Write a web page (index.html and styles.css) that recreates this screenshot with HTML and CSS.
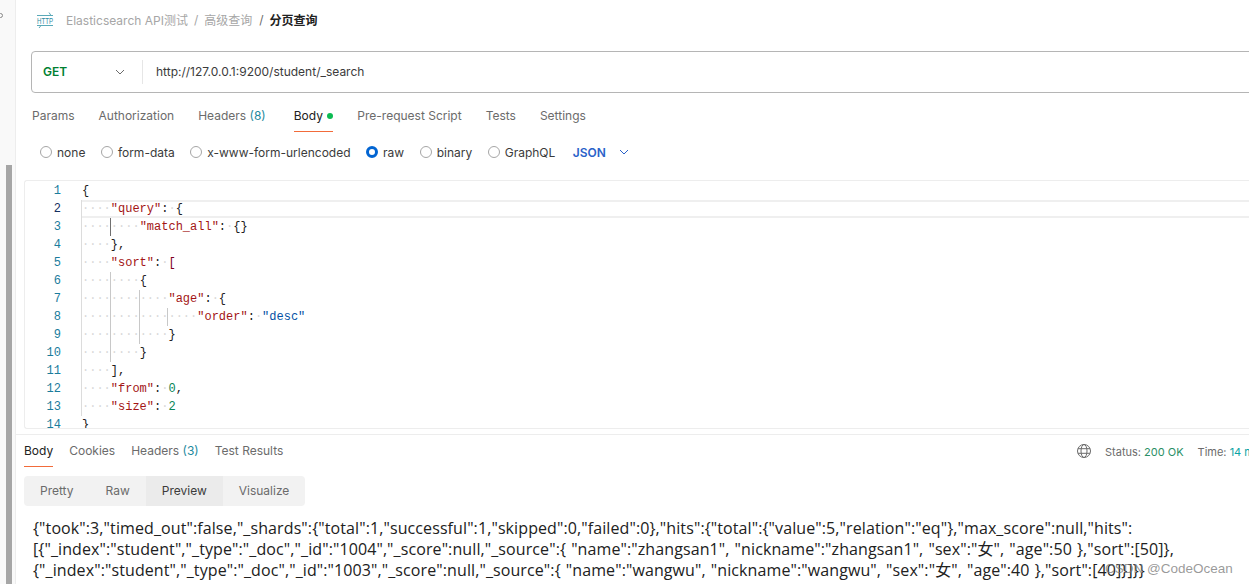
FILE: index.html
```html
<!DOCTYPE html>
<html lang="en">
<head>
<meta charset="utf-8">
<title>Postman</title>
<link rel="stylesheet" href="styles.css">
</head>
<body>
<div class="app">
  <aside class="rail"><div class="rail-dot"></div><div class="rail-thumb"></div></aside>
  <main class="main">
    <header class="crumbs">
      <svg class="http-icon" width="18" height="16" viewBox="0 0 18 16"><path d="M1 3.5H17M13 0.5L15 3.5M1 13.5H17M3 16L5 13.5" fill="none" stroke="#5aa9b8" stroke-width="1"/><text x="1" y="12" textLength="16" lengthAdjust="spacingAndGlyphs" class="http-text">HTTP</text></svg>
      <span class="crumb">Elasticsearch API测试</span><span class="sep">/</span>
      <span class="crumb">高级查询</span><span class="sep dark">/</span>
      <span class="crumb current">分页查询</span>
    </header>
    <div class="urlbar">
      <div class="method"><span>GET</span><svg width="10" height="6" viewBox="0 0 10 6"><path d="M1 1L5 5L9 1" fill="none" stroke="#6b6b6b" stroke-width="1"/></svg></div>
      <div class="url">http://127.0.0.1:9200/student/_search</div>
    </div>
    <nav class="tabs req-tabs">
      <span class="tab">Params</span>
      <span class="tab">Authorization</span>
      <span class="tab wide">Headers <em>(8)</em></span>
      <span class="tab active">Body <i class="dot"></i></span>
      <span class="tab">Pre-request Script</span>
      <span class="tab">Tests</span>
      <span class="tab">Settings</span>
    </nav>
    <div class="radios">
      <label class="radio"><i></i>none</label>
      <label class="radio"><i></i>form-data</label>
      <label class="radio"><i></i>x-www-form-urlencoded</label>
      <label class="radio on"><i></i>raw</label>
      <label class="radio"><i></i>binary</label>
      <label class="radio"><i></i>GraphQL</label>
      <span class="lang">JSON<svg width="10" height="6" viewBox="0 0 10 6"><path d="M1 1L5 5L9 1" fill="none" stroke="#2a62c9" stroke-width="1"/></svg></span>
    </div>
    <section class="editor">
      <div class="line"><b>1</b><code><u>{</u></code></div>
      <div class="line cur"><b>2</b><code><s>····</s><q>"query"</q><u>:</u><s>·</s><u>{</u></code></div>
      <div class="line"><b>3</b><code><s>····</s><s class="g1">····</s><q>"match_all"</q><u>:</u><s>·</s><u>{}</u></code></div>
      <div class="line"><b>4</b><code><s>····</s><u>},</u></code></div>
      <div class="line"><b>5</b><code><s>····</s><q>"sort"</q><u>:</u><s>·</s><u class="red">[</u></code></div>
      <div class="line"><b>6</b><code><s>····</s><s class="g2">····</s><u>{</u></code></div>
      <div class="line"><b>7</b><code><s>····</s><s class="g2">····</s><s class="g2">····</s><q>"age"</q><u>:</u><s>·</s><u>{</u></code></div>
      <div class="line"><b>8</b><code><s>····</s><s class="g2">····</s><s class="g2">····</s><s class="g2">····</s><q>"order"</q><u>:</u><s>·</s><span class="str">"desc"</span></code></div>
      <div class="line"><b>9</b><code><s>····</s><s class="g2">····</s><s class="g2">····</s><u>}</u></code></div>
      <div class="line"><b>10</b><code><s>····</s><s class="g2">····</s><u>}</u></code></div>
      <div class="line"><b>11</b><code><s>····</s><u>],</u></code></div>
      <div class="line"><b>12</b><code><s>····</s><q>"from"</q><u>:</u><s>·</s><span class="num">0</span><u>,</u></code></div>
      <div class="line"><b>13</b><code><s>····</s><q>"size"</q><u>:</u><s>·</s><span class="num">2</span></code></div>
      <div class="line"><b>14</b><code><u>}</u></code></div>
    </section>
    <section class="response">
      <div class="res-head">
        <nav class="tabs res-tabs">
          <span class="tab active">Body</span>
          <span class="tab">Cookies</span>
          <span class="tab">Headers <em>(3)</em></span>
          <span class="tab">Test Results</span>
        </nav>
        <div class="status">
          <svg width="14" height="14" viewBox="0 0 14 14" fill="none" stroke="#6b6b6b" stroke-width="1"><circle cx="7" cy="7" r="6.5"/><ellipse cx="7" cy="7" rx="3" ry="6.5"/><path d="M1 4.7H13M1 9.3H13"/></svg>
          <span class="st">Status: <em>200 OK</em></span>
          <span class="st">Time: <em class="teal">14 ms</em></span>
        </div>
      </div>
      <div class="segments">
        <span>Pretty</span><span>Raw</span><span class="sel">Preview</span><span>Visualize</span>
      </div>
      <div class="preview">{"took":3,"timed_out":false,"_shards":{"total":1,"successful":1,"skipped":0,"failed":0},"hits":{"total":{"value":5,"relation":"eq"},"max_score":null,"hits":<br>[{"_index":"student","_type":"_doc","_id":"1004","_score":null,"_source":{ "name":"zhangsan1", "nickname":"zhangsan1", "sex":"女", "age":50 },"sort":[50]},<br>{"_index":"student","_type":"_doc","_id":"1003","_score":null,"_source":{ "name":"wangwu", "nickname":"wangwu", "sex":"女", "age":40 },"sort":[40]}]}}</div>
    </section>
  </main>
</div>
<div class="watermark">CSDN @CodeOcean</div>
</body>
</html>
```
FILE: styles.css
```css
* { box-sizing: border-box; }
html, body { margin: 0; height: 584px; overflow: hidden; background: #fff; }
body { font-family: Inter, "Noto Sans CJK SC", sans-serif; font-size: 12px; color: #6b6b6b; position: relative; }
em { font-style: normal; color: #1f8a9e; }
.app { display: flex; width: 1249px; height: 584px; }
.rail { width: 16px; flex: none; background: #f9f9f9; border-right: 1px solid #ededed; position: relative; padding-top: 165px; }
.rail-dot { position: absolute; left: -2px; top: 13px; width: 5px; height: 5px; border: 1px solid #888; border-radius: 50%; }
.rail-thumb { width: 6px; height: 419px; margin-left: 6px; background: #a6a6a6; }
.main { flex: 1; min-width: 0; display: flex; flex-direction: column; }
.crumbs { height: 38px; padding: 0 0 0 20px; display: flex; align-items: center; gap: 6px; color: #a6a6a6; white-space: nowrap; }
.http-icon { margin: 2px 6px 0 0; overflow: visible; }
.http-text { font: 400 9px "Liberation Sans", sans-serif; fill: #2f8ca3; }
.sep.dark { color: #6b6b6b; margin-left: 1px; }
.current { color: #212121; font-weight: 600; }
.urlbar { margin: 13px 0 0 15px; height: 42px; width: 1240px; border: 1px solid #b5b5b5; border-radius: 4px; display: flex; align-items: center; }
.method { width: 111px; height: 24px; padding: 0 17px 1px 11px; border-right: 1px solid #e6e6e6; display: flex; align-items: center; justify-content: space-between; font-weight: 600; color: #007f31; }
.url { padding: 0 0 2px 13px; color: #3b3b3b; }
.tabs { display: flex; white-space: nowrap; }
.tab { position: relative; display: block; }
.tab.active { color: #212121; }
.tab.active::after { content: ""; position: absolute; left: 0; right: 0; bottom: 0; height: 1px; background: #f26b3a; }
.req-tabs { margin: 13px 0 0 16px; gap: 24px; }
.req-tabs .tab { height: 26px; line-height: 19px; }
.req-tabs .wide { padding-right: 4px; }
.dot { display: inline-block; width: 6px; height: 6px; margin-left: 1px; border-radius: 50%; background: #0cbb52; vertical-align: 1px; }
.radios { margin-top: 11px; padding-left: 24px; height: 18px; display: flex; align-items: center; gap: 15.5px; color: #3b3b3b; white-space: nowrap; }
.radio { display: flex; align-items: center; gap: 5px; }
.radio i { width: 12px; height: 12px; border: 1px solid #a6a6a6; border-radius: 50%; background: #fff; }
.radio.on i { border: 3.5px solid #0265d2; }
.lang { margin-left: 2px; display: flex; align-items: center; gap: 13px; font-weight: 600; color: #2a62c9; }
.editor { margin: 19px 0 0 8px; height: 249px; overflow: hidden; border: 1px solid #ededed; border-right: 0; border-radius: 3px 0 0 3px; padding-top: 1px; }
.line { display: flex; height: 18px; line-height: 18px; font-family: "Liberation Mono", monospace; font-size: 12px; }
.line b { width: 36px; flex: none; text-align: right; font-weight: 400; color: #1a7c9c; }
.line.cur b { color: #15305f; }
.line code { margin-left: 20px; flex: 1; font: inherit; white-space: pre; border-left: 1px solid #dcdcdc; }
.line:first-child code, .line:last-child code { border-left-color: transparent; }
.line.cur code { box-shadow: inset 0 2px 0 #efefef, inset 0 -2px 0 #efefef; }
.line s { text-decoration: none; color: #d9d9d9; display: inline-block; height: 18px; }
.line s.g1, .line s.g2 { border-left: 1px solid #c8c8c8; margin-left: -1px; }
.line s.g1 { border-left-color: #707070; }
.line u { text-decoration: none; color: #212121; }
.line u.red { color: #800020; }
.line q { quotes: none; color: #a31515; }
.str { color: #0451a5; }
.num { color: #098658; }
.response { margin: 5px 0 0 0; border-top: 1px solid #ededed; flex: 1; padding: 7px 0 0 8px; min-height: 0; }
.res-head { display: flex; justify-content: space-between; height: 25px; }
.res-tabs { gap: 16px; }
.res-tabs .tab { height: 25px; line-height: 18px; }
.status { display: flex; align-items: flex-start; gap: 14px; font-size: 11px; white-space: nowrap; width: 172px; overflow: hidden; flex: none; line-height: 18px; padding-top: 1px; }
.status svg { margin-top: 1px; flex: none; }
.status em { color: #2a8f66; }
.status em.teal { color: #0aa3a3; }
.segments { margin-top: 9px; width: 281px; height: 30px; display: flex; background: #f2f2f2; border-radius: 4px; overflow: hidden; line-height: 30px; }
.segments span { padding: 0 16px; }
.segments .sel { background: #ebebeb; color: #3b3b3b; }
.preview { margin: 12px 0 0 9px; font-family: "Open Sans", "Noto Sans CJK SC", sans-serif; font-size: 16px; letter-spacing: .1px; word-spacing: .8px; line-height: 21px; color: #212121; white-space: nowrap; }
.watermark { position: absolute; left: 1105px; top: 560px; font-family: "Liberation Sans", sans-serif; font-size: 13.5px; line-height: 18px; color: rgba(120,120,120,.75); white-space: nowrap; }
```
